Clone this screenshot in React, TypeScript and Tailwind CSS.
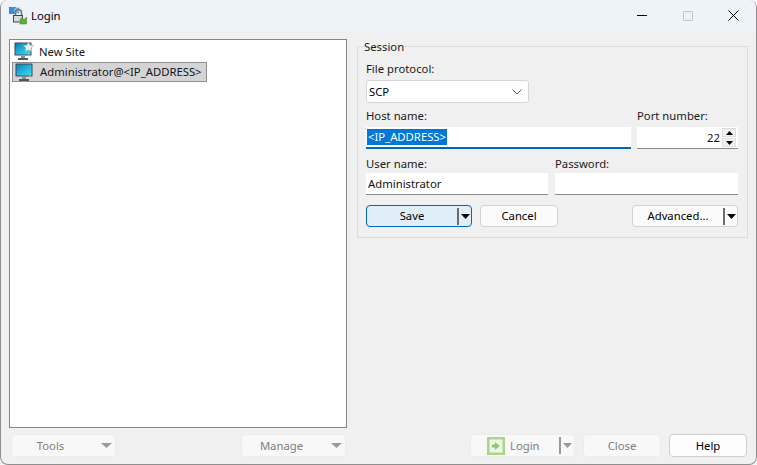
import React from "react";

const font = { fontFamily: '"Noto Sans", sans-serif' };

function Monitor({ star }: { star?: boolean }) {
  const id = star ? "scr1" : "scr2";
  return (
    <svg width="20" height="19" viewBox="0 0 20 19" className="shrink-0">
      <defs>
        <linearGradient id={id} x1="0" y1="0" x2="1" y2="1">
          <stop offset="0" stopColor="#0f7fb8" />
          <stop offset="0.6" stopColor="#27bde0" />
          <stop offset="1" stopColor="#4fd6ea" />
        </linearGradient>
      </defs>
      <rect x="0.5" y="0.5" width="17" height="13" fill="#3a4a54" rx="0.5" />
      <rect x="1.5" y="1.5" width="15" height="11" fill={`url(#${id})`} />
      <rect x="14" y="12.5" width="2" height="1" fill="#7be05a" />
      <rect x="7" y="14" width="4" height="2" fill="#8a8f92" />
      <rect x="4" y="16" width="10" height="2" fill="#55595c" />
      {star && (
        <path d="M14.5 0 L16 3.2 L19.5 3.6 L17 6 L17.7 9.5 L14.5 7.8 L11.3 9.5 L12 6 L9.5 3.6 L13 3.2 Z" fill="#f2f2f2" stroke="#b5b5b5" strokeWidth="0.7" />
      )}
    </svg>
  );
}

function AppIcon() {
  return (
    <svg width="18" height="18" viewBox="0 0 18 18" className="shrink-0">
      <rect x="0.5" y="0.5" width="6" height="6" fill="#2f8fe0" stroke="#1b67ad" strokeWidth="0.6" />
      <rect x="5" y="1" width="5" height="5" fill="#7cc0ee" stroke="#5c8fb5" strokeWidth="0.6" />
      <path d="M6.5 9 V5.5 a3 3 0 0 1 6 0 V9" fill="none" stroke="#777" strokeWidth="1.6" />
      <rect x="4.5" y="8.5" width="9" height="6.5" fill="#d9d9d9" stroke="#444" strokeWidth="1" />
      <path d="M17.5 10 V17 H10.5 L12.6 14.9 L10.6 12.9 L13 10.5 L15 12.5 Z" fill="#58b22e" stroke="#3c8a1c" strokeWidth="0.5" />
    </svg>
  );
}

function Caret({ color = "#000", width = 9 }: { color?: string; width?: number }) {
  return (
    <svg width={width} height="5" viewBox={`0 0 ${width} 5`} className="shrink-0">
      <path d={`M0 0 H${width} L${width / 2} 5 Z`} fill={color} />
    </svg>
  );
}

function Split() {
  return <span className="block w-[2px] h-[17px] bg-[#6d6d6d]" />;
}

function Field({ label, className, tall, children }: { label: string; className: string; tall?: boolean; children?: React.ReactNode }) {
  return (
    <div className={`flex flex-col ${className}`}>
      <div className={`${tall ? "h-[19px]" : "h-[17px]"} leading-[14px] text-[#1a1a1a] pt-px`}>{label}</div>
      {children}
    </div>
  );
}

function Input({ children, active }: { children?: React.ReactNode; active?: boolean }) {
  return (
    <div
      className={`h-[22px] bg-white px-[2px] flex items-center leading-[16px] text-[#111] ${
        active ? "border-b-2 border-[#0067c0]" : "border-b border-[#8a8a8a]"
      }`}
    >
      {children}
    </div>
  );
}

export default function App() {
  return (
    <div className="w-[757px] h-[465px] bg-[#f7f7f7] overflow-hidden text-[11.3px] text-black" style={font}>
      <div className="w-[757px] h-[465px] rounded-[8px] border-b border-l border-r border-[#8f8f8f] overflow-hidden flex flex-col bg-[#f0f0f0]">
        <div className="h-[31px] shrink-0 bg-[#eef2f9] flex items-center">
          <div className="ml-[8px] mr-[4px]"><AppIcon /></div>
          <span className="leading-[16px]">Login</span>
          <div className="ml-auto flex items-center">
            <div className="w-[46px] h-[31px] flex items-center justify-center">
              <span className="block w-[10px] h-px bg-black" />
            </div>
            <div className="w-[46px] h-[31px] flex items-center justify-center">
              <span className="block w-[10px] h-[10px] border border-[#c4c4c4] rounded-[1px]" />
            </div>
            <div className="w-[45px] h-[31px] flex items-center justify-center pr-[1px]">
              <svg width="11" height="11" viewBox="0 0 11 11">
                <path d="M0.5 0.5 L10.5 10.5 M10.5 0.5 L0.5 10.5" stroke="#000" strokeWidth="1" />
              </svg>
            </div>
          </div>
        </div>

        <div className="flex-1 flex flex-col pl-[8px] pr-[8px] pt-[8px]">
          <div className="flex h-[389px] gap-[10px]">
            <div className="w-[338px] h-[389px] bg-white border border-[#82878f] p-[2px]">
              <div className="h-[19px] flex items-center pl-[1px] gap-[5px]">
                <div className="ml-[1px]"><Monitor star /></div>
                <span className="leading-[16px] text-[#10141c]">New Site</span>
              </div>
              <div className="h-[20px] w-[195px] mt-px flex items-center bg-[#d4d4d4] border border-[#8e8e8e] gap-[5px] pl-[2px]">
                <Monitor />
                <span className="leading-[16px] whitespace-nowrap text-[#10141c]">Administrator@&lt;IP_ADDRESS&gt;</span>
              </div>
            </div>

            <fieldset className="w-[391px] h-[199px] border border-[#dcdcdc] px-[8px] pb-[10px]">
              <legend className="-ml-[3px] px-[1px] leading-[14px] text-[#1a1a1a] relative top-px">Session</legend>
              <div className="flex flex-col w-[372px] mt-[8px]">
                <Field label="File protocol:" tall className="w-[163px] h-[42px]">
                  <div className="h-[23px] bg-white border border-[#d6d6d6] rounded-[3px] flex items-center justify-between pl-[2px] pr-[6px]">
                    <span className="leading-[16px]">SCP</span>
                    <svg width="10" height="6" viewBox="0 0 10 6"><path d="M0.5 0.5 L5 5 L9.5 0.5" fill="none" stroke="#555" strokeWidth="1" /></svg>
                  </div>
                </Field>
                <div className="flex gap-[6px] mt-[5px]">
                  <Field label="Host name:" tall className="w-[265px]">
                    <Input active>
                      <span className="bg-[#0078d7] text-white leading-[16px] px-px -ml-px">&lt;IP_ADDRESS&gt;</span>
                    </Input>
                  </Field>
                  <Field label="Port number:" tall className="w-[101px]">
                    <Input>
                      <div className="flex items-center justify-end w-full">
                        <span className="leading-[16px] mr-[2px]">22</span>
                        <div className="flex flex-col gap-px w-[14px]">
                          <div className="h-[9px] bg-[#f1f1f1] border border-[#dedede] flex items-center justify-center">
                            <svg width="7" height="4" viewBox="0 0 7 4"><path d="M3.5 0 L7 4 H0 Z" fill="#000" /></svg>
                          </div>
                          <div className="h-[9px] bg-[#f1f1f1] border border-[#dedede] flex items-center justify-center">
                            <svg width="7" height="4" viewBox="0 0 7 4"><path d="M0 0 H7 L3.5 4 Z" fill="#000" /></svg>
                          </div>
                        </div>
                      </div>
                    </Input>
                  </Field>
                </div>
                <div className="flex gap-[7px] mt-[7px]">
                  <Field label="User name:" className="w-[182px]">
                    <Input>Administrator</Input>
                  </Field>
                  <Field label="Password:" className="w-[183px]">
                    <Input />
                  </Field>
                </div>
                <div className="flex mt-[10px]">
                  <div className="w-[106px] h-[22px] rounded-[4px] border border-[#0067c0] bg-[#e0eef9] flex items-center">
                    <span className="flex-1 text-center leading-[16px]">Save</span>
                    <Split />
                    <span className="w-[12px] flex justify-center"><Caret /></span>
                  </div>
                  <div className="ml-[8px] w-[78px] h-[22px] rounded-[4px] border border-[#d2d2d2] bg-[#fbfbfb] flex items-center justify-center leading-[16px]">Cancel</div>
                  <div className="ml-auto w-[106px] h-[22px] rounded-[4px] border border-[#d2d2d2] bg-[#fbfbfb] flex items-center">
                    <span className="flex-1 text-center leading-[16px]">Advanced...</span>
                    <Split />
                    <span className="w-[12px] flex justify-center"><Caret /></span>
                  </div>
                </div>
              </div>
            </fieldset>
          </div>

          <div className="flex items-center h-[23px] mt-[6px] text-[#7f7f7f]">
            <div className="w-[105px] h-[23px] ml-[2px] rounded-[4px] bg-[#f8f8f8] border border-[#ececec] flex items-center">
              <span className="flex-1 text-center leading-[16px] pr-[12px]">Tools</span>
              <span className="pr-[3px]"><Caret color="#999" width={11} /></span>
            </div>
            <div className="w-[105px] h-[23px] ml-[125px] rounded-[4px] bg-[#f8f8f8] border border-[#ececec] flex items-center">
              <span className="flex-1 text-center leading-[16px] pr-[10px]">Manage</span>
              <span className="pr-[3px]"><Caret color="#999" width={11} /></span>
            </div>
            <div className="w-[105px] h-[23px] ml-[124px] rounded-[4px] bg-[#f8f8f8] border border-[#ececec] flex items-center">
              <svg width="18" height="18" viewBox="0 0 18 18" className="ml-[16px] shrink-0">
                <rect width="18" height="18" fill="#a9d68a" />
                <rect x="2.5" y="2.5" width="13" height="13" fill="#eef7e6" />
                <path d="M5 7.5 H8 V5 L12.5 9 L8 13 V10.5 H5 Z" fill="#8cc665" />
              </svg>
              <span className="leading-[16px] ml-[5px]">Login</span>
              <span className="ml-auto mr-[2px] h-[17px] w-[2px] bg-[#9a9a9a]" />
              <span className="mr-[2px]"><Caret color="#999" width={9} /></span>
            </div>
            <div className="w-[78px] h-[23px] ml-[8px] rounded-[4px] bg-[#f8f8f8] border border-[#ececec] flex items-center justify-center leading-[16px]">Close</div>
            <div className="w-[78px] h-[23px] ml-[8px] rounded-[4px] bg-[#fdfdfd] border border-[#cfcfcf] flex items-center justify-center leading-[16px] text-black">Help</div>
          </div>
        </div>
      </div>
    </div>
  );
}
